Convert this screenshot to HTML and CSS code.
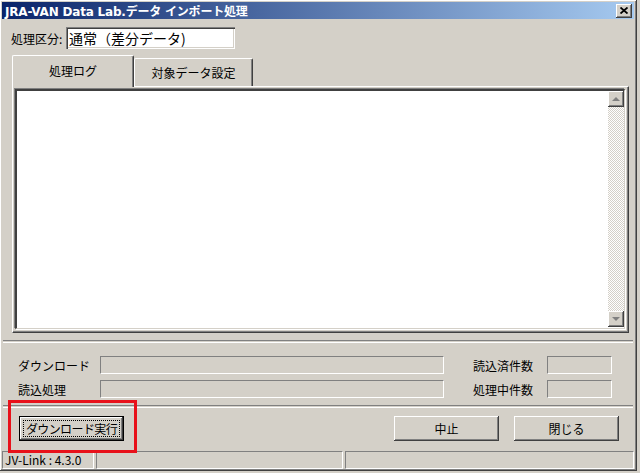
FILE: index.html
```html
<!DOCTYPE html>
<html lang="ja">
<head>
    <meta charset="UTF-8">
    <title>JRA-VAN Data Lab.データ インポート処理</title>
    <link rel="stylesheet" href="styles.css">
</head>
<body>
    <div class="window">
        <div class="titlebar">
            <span class="title">JRA-VAN Data Lab.データ インポート処理</span>
            <span class="close-btn">
                <svg width="8" height="7" viewBox="0 0 8 7"><path d="M0.5 0.5 L7.5 6.5 M7.5 0.5 L0.5 6.5" stroke="#000" stroke-width="1.8"/></svg>
            </span>
        </div>

        <div class="client">
            <div class="mode-row">
                <span class="mode-label">処理区分:</span>
                <div class="mode-box">通常（差分データ)</div>
            </div>

            <div class="tabs">
                <div class="tab active">処理ログ</div>
                <div class="tab">対象データ設定</div>
            </div>

            <div class="tab-panel">
                <div class="log">
                    <div class="log-area"></div>
                    <div class="scrollbar">
                        <div class="scroll-btn"><span class="arrow up"></span></div>
                        <div class="scroll-track"></div>
                        <div class="scroll-btn"><span class="arrow down"></span></div>
                    </div>
                </div>
            </div>

            <div class="separator"></div>

            <div class="progress">
                <span class="p-label">ダウンロード</span>
                <div class="sunken"></div>
                <span class="c-label">読込済件数</span>
                <div class="sunken"></div>

                <span class="p-label">読込処理</span>
                <div class="sunken"></div>
                <span class="c-label">処理中件数</span>
                <div class="sunken"></div>
            </div>

            <div class="separator"></div>

            <div class="button-row">
                <button class="btn default"><span class="focus">ダウンロード実行</span></button>
                <div class="spacer"></div>
                <button class="btn">中止</button>
                <button class="btn">閉じる</button>
            </div>
        </div>

        <div class="statusbar">
            <div class="status-cell first">JV-Link : 4.3.0</div>
            <div class="status-cell mid"></div>
            <div class="status-cell last"></div>
        </div>

        <div class="highlight"></div>
    </div>
</body>
</html>
```

FILE: styles.css
```css
/* 基本 */
body {
    margin: 0;
    background: #d4d0c8;
    font-family: "Noto Sans CJK JP", "DejaVu Sans", sans-serif;
    font-size: 12px;
    color: #000;
}

/* ウィンドウ枠 */
.window {
    position: relative;
    width: 637px;
    height: 471px;
    box-sizing: border-box;
    padding: 2px 2px 1px 2px;
    border-right: 1px solid #404040;
    border-bottom: 1px solid #404040;
    box-shadow: inset 1px 1px #fff, inset -1px -1px #808080;
    display: flex;
    flex-direction: column;
    overflow: hidden;
}

/* タイトルバー */
.titlebar {
    height: 18px;
    display: flex;
    align-items: center;
    justify-content: space-between;
    padding: 0 2px 0 3px;
    background: linear-gradient(to right, #0a246a, #a6caf0);
}

.title {
    color: #fff;
    font-family: "DejaVu Sans", "Noto Sans CJK JP", sans-serif;
    font-weight: bold;
    font-size: 12px;
    letter-spacing: -0.2px;
}

.close-btn {
    width: 16px;
    height: 14px;
    box-sizing: border-box;
    background: #d4d0c8;
    box-shadow: inset -1px -1px #404040, inset 1px 1px #fff, inset -2px -2px #808080;
    display: flex;
    align-items: center;
    justify-content: center;
}

/* クライアント領域 */
.client {
    flex: 1;
    display: flex;
    flex-direction: column;
}

.mode-row {
    display: flex;
    align-items: center;
    margin-top: 8px;
    padding-left: 9px;
    height: 22px;
}

.mode-label {
    width: 55px;
}

.mode-box {
    width: 169px;
    height: 22px;
    box-sizing: border-box;
    background: #fff;
    box-shadow: inset 1px 1px #808080, inset 2px 2px #404040, inset -1px -1px #fff, inset -2px -2px #d4d0c8;
    font-size: 14px;
    line-height: 22px;
    padding-left: 3px;
}

/* タブ */
.tabs {
    display: flex;
    align-items: flex-end;
    margin-top: 6px;
    padding-left: 10px;
    height: 31px;
}

.tab {
    height: 28px;
    box-sizing: border-box;
    display: flex;
    align-items: center;
    justify-content: center;
    border-top: 1px solid #fff;
    border-left: 1px solid #fff;
    border-right: 1px solid #404040;
    border-radius: 2px 2px 0 0;
    box-shadow: inset -1px 0 #808080;
    width: 119px;
}

.tab.active {
    height: 32px;
    width: 122px;
    margin-bottom: -1px;
    background: #d4d0c8;
    position: relative;
    z-index: 1;
    padding-bottom: 2px;
}

.tab-panel {
    margin-left: 10px;
    width: 617px;
    height: 247px;
    box-sizing: border-box;
    border-top: 1px solid #fff;
    border-left: 1px solid #fff;
    border-right: 1px solid #404040;
    border-bottom: 1px solid #404040;
    box-shadow: inset -1px -1px #808080;
    padding: 2px 3px 3px 2px;
}

.log {
    height: 100%;
    display: flex;
    box-sizing: border-box;
    background: #fff;
    border-top: 2px solid #404040;
    border-left: 2px solid #404040;
    border-right: 1px solid #d4d0c8;
    border-bottom: 1px solid #d4d0c8;
    box-shadow: -1px -1px #808080, 1px 1px #fff;
    padding: 0 0 1px 0;
}

.log-area {
    flex: 1;
}

.scrollbar {
    width: 16px;
    display: flex;
    flex-direction: column;
}

.scroll-btn {
    height: 16px;
    background: #d4d0c8;
    box-sizing: border-box;
    box-shadow: inset -1px -1px #404040, inset 1px 1px #fff, inset -2px -2px #808080;
    display: flex;
    align-items: center;
    justify-content: center;
}

.arrow {
    width: 0;
    height: 0;
    border-left: 4px solid transparent;
    border-right: 4px solid transparent;
}

.arrow.up {
    border-bottom: 4px solid #808080;
}

.arrow.down {
    border-top: 4px solid #808080;
}

.scroll-track {
    flex: 1;
    background: repeating-conic-gradient(#d4d0c8 0 25%, #fff 0 50%) 0 0 / 2px 2px;
}

/* 区切り線 */
.separator {
    height: 1px;
    border-top: 1px solid #808080;
    border-bottom: 1px solid #fff;
    margin: 7px 1px 0 1px;
}

/* 進捗 */
.progress {
    display: grid;
    grid-template-columns: 82px 344px 103px 65px;
    grid-auto-rows: 18px;
    row-gap: 6px;
    align-items: center;
    padding-left: 16px;
    margin-top: 13px;
}

.c-label {
    text-align: right;
    padding-right: 14px;
}

.sunken {
    height: 18px;
    box-sizing: border-box;
    border-top: 1px solid #808080;
    border-left: 1px solid #808080;
    border-right: 1px solid #fff;
    border-bottom: 1px solid #fff;
}

.progress + .separator {
    margin-top: 7px;
}

/* ボタン */
.button-row {
    display: flex;
    gap: 15px;
    margin-top: 8px;
    padding: 0 15px 0 17px;
}

.spacer {
    flex: 1;
}

.btn {
    width: 105px;
    height: 25px;
    box-sizing: border-box;
    background: #d4d0c8;
    border: none;
    font-family: inherit;
    font-size: 12px;
    padding: 0;
    white-space: nowrap;
    box-shadow: inset -1px -1px #404040, inset 1px 1px #fff, inset -2px -2px #808080;
}

.btn.default {
    border: 1px solid #000;
    padding: 3px;
    display: flex;
}

.focus {
    flex: 1;
    border: 1px dotted #000;
    display: flex;
    align-items: center;
    justify-content: center;
    letter-spacing: -0.6px;
}

/* ステータスバー */
.statusbar {
    margin-top: 10px;
    height: 18px;
    display: flex;
    gap: 2px;
}

.status-cell {
    box-sizing: border-box;
    border-top: 1px solid #808080;
    border-left: 1px solid #808080;
    border-right: 1px solid #fff;
    border-bottom: 1px solid #fff;
    line-height: 16px;
    padding-left: 2px;
    white-space: nowrap;
    overflow: hidden;
}

.status-cell.first {
    width: 92px;
}

.status-cell.mid {
    width: 247px;
}

.status-cell.last {
    flex: 1;
}

/* 強調枠 */
.highlight {
    position: absolute;
    left: 8px;
    top: 400px;
    width: 129px;
    height: 53px;
    box-sizing: border-box;
    border: 3px solid #e8111a;
    pointer-events: none;
}
```
